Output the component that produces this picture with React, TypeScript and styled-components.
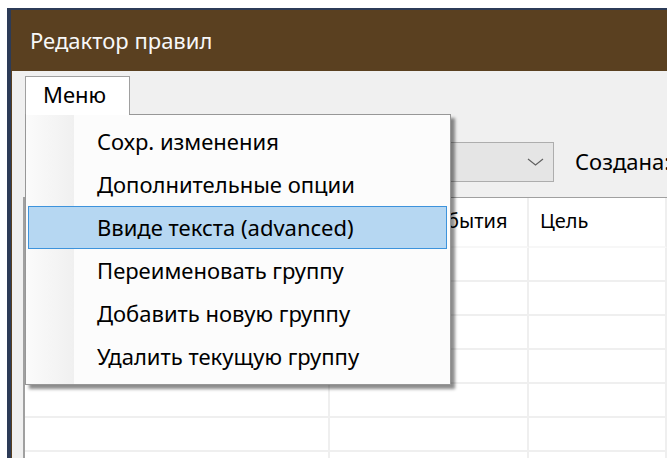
import React from 'react';
import styled, { createGlobalStyle } from 'styled-components';

const GlobalStyle = createGlobalStyle`
  html, body {
    margin: 0;
    padding: 0;
    background: #fff;
    overflow: hidden;
  }
  body {
    font-family: "Noto Sans", "Open Sans", sans-serif;
    color: #000;
  }
`;

const Page = styled.div`
  width: 667px;
  height: 458px;
  box-sizing: border-box;
  padding: 8px 0 0 7px;
  overflow: hidden;
  background: #fff;
`;

const Window = styled.div`
  height: 100%;
  display: flex;
  flex-direction: column;
  border-top: 2px solid #2c3b57;
  border-left: 4px solid #2c3b57;
  background: #5a4020;
`;

const TitleBar = styled.div`
  height: 61px;
  flex: none;
  display: flex;
  align-items: center;
  padding: 0 0 1px 19px;
  color: #f8f8f8;
  font-size: 22px;
  box-sizing: border-box;
`;

const Client = styled.div`
  flex: 1;
  margin-left: 1px;
  background: #f0f0f0;
  display: flex;
  flex-direction: column;
  min-height: 0;
`;

const MenuStrip = styled.div`
  height: 43px;
  flex: none;
  display: flex;
  align-items: flex-end;
  padding-left: 13px;
  position: relative;
  z-index: 2;
`;

const MenuTab = styled.div`
  position: relative;
  height: 38px;
  width: 105px;
  box-sizing: border-box;
  border: 1px solid #a0a0a0;
  border-bottom: none;
  background: #fff;
  font-size: 22px;
  line-height: 34px;
  padding-left: 17px;
`;

const Dropdown = styled.div`
  position: absolute;
  top: 100%;
  left: -1px;
  width: 426px;
  height: 271px;
  box-sizing: border-box;
  border: 1px solid #979797;
  background: linear-gradient(to right, #fbfbfb 0, #f0f0f0 48px, #fcfcfc 48px, #fcfcfc 100%);
  box-shadow: 4px 4px 3px rgba(0, 0, 0, 0.45);
  padding: 5px 3px 0 2px;
  line-height: normal;

  /* the open tab runs straight into the list, no border under it */
  &::before {
    content: '';
    position: absolute;
    top: -1px;
    left: 0;
    width: 103px;
    height: 1px;
    background: #fff;
  }
`;

const MenuItem = styled.div<{ $active?: boolean }>`
  height: 43px;
  box-sizing: border-box;
  display: flex;
  align-items: center;
  padding: 0 0 1px 68px;
  font-size: 22px;
  white-space: nowrap;
  border: 1px solid ${p => (p.$active ? '#3d93dc' : 'transparent')};
  background: ${p => (p.$active ? '#b6d7f2' : 'transparent')};
`;

const Toolbar = styled.div`
  height: 83px;
  flex: none;
  box-sizing: border-box;
  display: flex;
  align-items: center;
  padding: 12px 0 0 18px;
  font-size: 22px;
  white-space: nowrap;
`;

const ToolLabel = styled.span<{ $width?: number }>`
  width: ${p => (p.$width ? `${p.$width}px` : 'auto')};
  margin-left: ${p => (p.$width ? '0' : '21px')};
  padding-bottom: 2px;
  flex: none;
`;

const Combo = styled.div`
  width: 304px;
  height: 40px;
  flex: none;
  box-sizing: border-box;
  border: 1px solid #adadad;
  background: #e5e5e5;
  display: flex;
  align-items: center;
  justify-content: flex-end;
  padding-right: 9px;
`;

const Grid = styled.div`
  flex: 1;
  margin-left: 11px;
  border-left: 2px solid #a0a0a0;
  border-top: 1px solid #a0a0a0;
  background: #fff;
  display: grid;
  grid-template-columns: 305px 199px 1fr;
  grid-template-rows: 50px;
  grid-auto-rows: 34px;
  font-size: 20px;
  overflow: hidden;
`;

const Cell = styled.div<{ $head?: boolean }>`
  box-sizing: border-box;
  border-right: 2px solid #efefef;
  border-bottom: 2px solid ${p => (p.$head ? '#f7f7f7' : '#efefef')};
  display: flex;
  align-items: center;
  padding-left: 11px;
  padding-bottom: ${p => (p.$head ? '3px' : '0')};
  white-space: nowrap;
  overflow: hidden;
`;

const menuItems = [
  'Сохр. изменения',
  'Дополнительные опции',
  'Ввиде текста (advanced)',
  'Переименовать группу',
  'Добавить новую группу',
  'Удалить текущую группу',
];

const columns = ['Название', 'Условие события', 'Цель'];

const Chevron = () => (
  <svg width="17" height="8" viewBox="0 0 17 8">
    <polyline points="1,1 8.5,7 16,1" fill="none" stroke="#606060" strokeWidth="1.2" />
  </svg>
);

export default function App() {
  const rows = Array.from({ length: 7 });

  return (
    <>
      <GlobalStyle />
      <Page>
        <Window>
          <TitleBar>Редактор правил</TitleBar>
          <Client>
            <MenuStrip>
              <MenuTab>
                Меню
                <Dropdown>
                  {menuItems.map((item, i) => (
                    <MenuItem key={item} $active={i === 2}>
                      {item}
                    </MenuItem>
                  ))}
                </Dropdown>
              </MenuTab>
            </MenuStrip>
            <Toolbar>
              <ToolLabel $width={220}>Группа:</ToolLabel>
              <Combo>
                <Chevron />
              </Combo>
              <ToolLabel>Создана:</ToolLabel>
            </Toolbar>
            <Grid>
              {columns.map(c => (
                <Cell key={c} $head>
                  {c}
                </Cell>
              ))}
              {rows.map((_, r) =>
                columns.map(c => <Cell key={`${r}-${c}`} />)
              )}
            </Grid>
          </Client>
        </Window>
      </Page>
    </>
  );
}
